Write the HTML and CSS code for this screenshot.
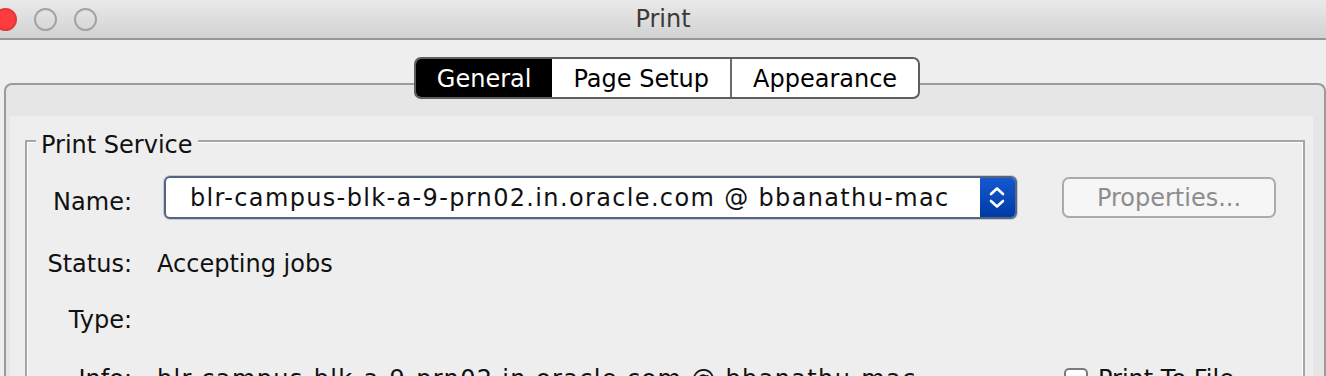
FILE: index.html
```html
<!DOCTYPE html>
<html lang="en">
<head>
  <meta charset="UTF-8" />
  <title>Print</title>
  <link rel="stylesheet" href="styles.css">
</head>
<body>

  <div class="titlebar">
    <div class="lights">
      <span class="light light-close"></span>
      <span class="light"></span>
      <span class="light"></span>
    </div>
    <div class="title">Print</div>
    <div></div>
  </div>

  <div class="main">
    <div class="tabbar">
      <div class="tabs">
        <div class="tab active">General</div>
        <div class="tab">Page Setup</div>
        <div class="tab">Appearance</div>
      </div>
    </div>

    <div class="pane">
      <div class="pane-body">
        <fieldset class="group">
          <legend>Print Service</legend>
          <div class="form">
            <div class="key key-name">Name:</div>
            <div class="val name-row">
              <div class="combo">
                <span class="combo-text">blr-campus-blk-a-9-prn02.in.oracle.com @ bbanathu-mac</span>
                <span class="combo-arrows">
                  <svg width="35" height="39" viewBox="0 0 35 39">
                    <path d="M11 16 L17 10.5 L23 16" fill="none" stroke="#fff" stroke-width="2.6" stroke-linecap="round" stroke-linejoin="round"/>
                    <path d="M11 23 L17 28.5 L23 23" fill="none" stroke="#fff" stroke-width="2.6" stroke-linecap="round" stroke-linejoin="round"/>
                  </svg>
                </span>
              </div>
              <button class="btn" disabled>Properties...</button>
            </div>

            <div class="key">Status:</div>
            <div class="val">Accepting jobs</div>

            <div class="key">Type:</div>
            <div class="val"></div>

            <div class="key row-last">Info:</div>
            <div class="val info-row row-last">
              <span class="info-text">blr-campus-blk-a-9-prn02.in.oracle.com @ bbanathu-mac</span>
              <span class="check"><span class="box"></span>Print To File</span>
            </div>
          </div>
        </fieldset>
      </div>
    </div>
  </div>

</body>
</html>
```

FILE: styles.css
```css
body {
  margin: 0;
  background: #eeeeee;
  color: #111;
  font-family: "DejaVu Sans", sans-serif;
  font-size: 24px;
  overflow: hidden;
}

/* window title bar */
.titlebar {
  height: 38px;
  border-bottom: 2px solid #969696;
  background: linear-gradient(#e9e9e9, #d2d2d2);
  display: grid;
  grid-template-columns: 1fr auto 1fr;
  align-items: center;
}

.lights {
  display: flex;
  gap: 17px;
  margin-left: -6px;
}

.light {
  width: 19px;
  height: 19px;
  border: 2px solid #a3a3a3;
  border-radius: 50%;
}

.light-close {
  background: #fd3c3e;
  border-color: #e2373a;
}

.title {
  color: #3a3a3a;
}

/* tabs */
.main {
  padding-top: 17px;
}

.tabbar {
  display: flex;
  justify-content: center;
  padding-left: 8px;
  position: relative;
  z-index: 1;
}

.tabs {
  display: flex;
  border: 2px solid #5e5e5e;
  border-radius: 7px;
  background: #fff;
  overflow: hidden;
}

.tab {
  padding: 3px 21px 0;
  line-height: 35px;
  color: #000;
}

.tab.active {
  background: #000;
  color: #fff;
}

.tab:last-child {
  border-left: 2px solid #6a6a6a;
}

.pane {
  margin: -16px 0 0 4px;
  border: 2px solid #9b9b9b;
  border-bottom: none;
  border-radius: 8px 8px 0 0;
  background: #e6e6e6;
  padding: 31px 11px 0 4px;
}

.pane-body {
  background: #eeeeee;
  padding: 7px 8px 40px 15px;
}

/* print service group */
.group {
  margin: 0;
  padding: 17px 0 0;
  border: 2px solid #a6a6a6;
  box-shadow: inset 1px 1px 0 #fff, inset -1px -1px 0 #fff;
  min-width: 0;
}

.group legend {
  margin-left: 9px;
  padding: 8px 5px 0;
  line-height: 28px;
  background: #eeeeee;
}

.form {
  display: grid;
  grid-template-columns: 105px 1fr;
  column-gap: 25px;
  row-gap: 28px;
  line-height: 28px;
}

.key {
  text-align: right;
}

.key-name {
  padding-top: 12px;
}

.row-last {
  margin-top: 3px;
}

.name-row {
  display: flex;
  align-items: flex-start;
  height: 46px;
}

.combo {
  margin-left: 7px;
  width: 849px;
  height: 39px;
  border: 2px solid #56657f;
  border-radius: 6px;
  background: #fff;
  box-shadow: 0 0 0 1px #c3cad6;
  display: flex;
  align-items: center;
  overflow: hidden;
}

.combo-text {
  flex: 1;
  padding-left: 24px;
  letter-spacing: 1.35px;
  white-space: nowrap;
}

.combo-arrows {
  width: 35px;
  height: 39px;
  background: linear-gradient(#1459d2, #003aa4);
  display: flex;
}

.btn {
  margin: 1px 0 0 45px;
  width: 214px;
  height: 41px;
  border: 2px solid #ababab;
  border-radius: 7px;
  background: #f6f6f6;
  color: #8d8d8d;
  font-family: inherit;
  font-size: 24px;
  padding: 0;
}

.info-row {
  display: flex;
}

.info-text {
  flex: 0 0 907px;
  letter-spacing: 1.35px;
  white-space: nowrap;
}

.check {
  display: flex;
}

.check .box {
  width: 20px;
  height: 20px;
  margin: 3px 10px 0 0;
  border: 2px solid #7b7b7b;
  border-radius: 5px;
  background: #fff;
}
```
